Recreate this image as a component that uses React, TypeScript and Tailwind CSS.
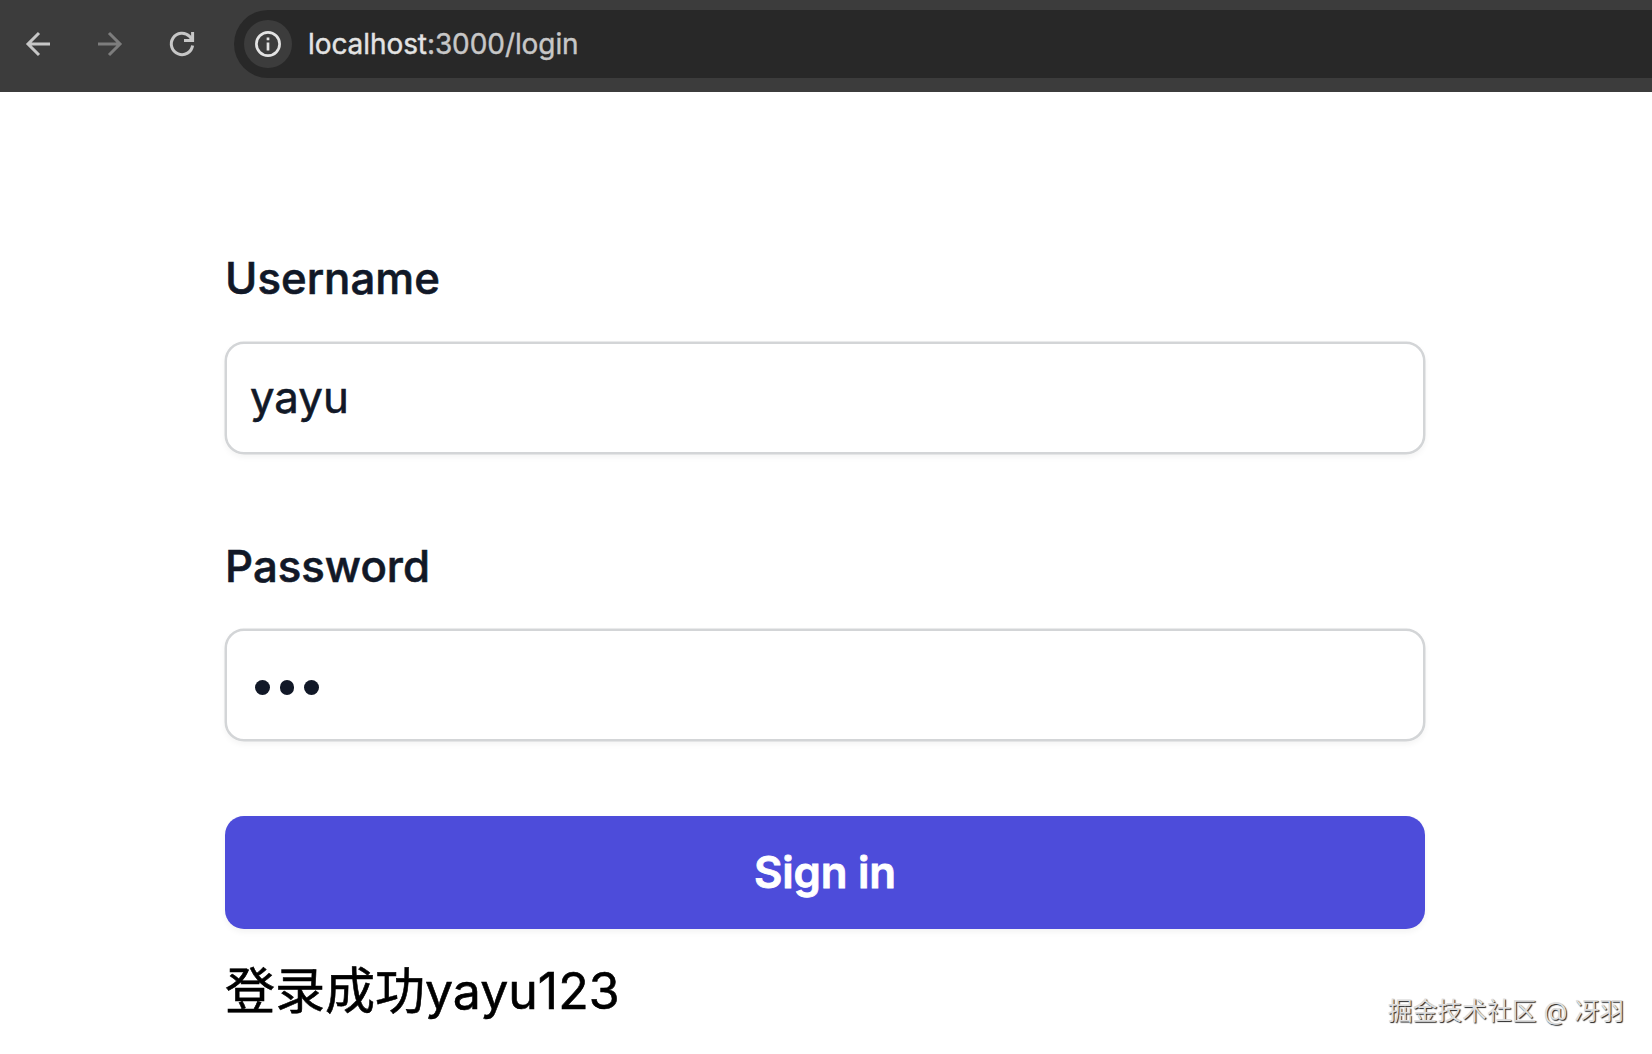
import { useState } from "react";

function BrowserBar() {
    return (
        <div className="flex h-[92px] items-start bg-[#3c3c3c] pt-[10px]">
            <div className="flex h-[68px] w-[234px] shrink-0 items-center gap-9 pl-5">
                <svg className="h-9 w-9" viewBox="0 0 36 36" fill="none" stroke="#c7c7c7" strokeWidth="3">
                    <path d="M30 18H8M19 7L8 18l11 11" />
                </svg>
                <svg className="h-9 w-9" viewBox="0 0 36 36" fill="none" stroke="#7d7d7d" strokeWidth="3">
                    <path d="M6 18h22M17 7l11 11-11 11" />
                </svg>
                <svg className="h-9 w-9" viewBox="0 0 36 36" fill="none" stroke="#c7c7c7" strokeWidth="3">
                    <path d="M28.6 19.5A10.7 10.7 0 1 1 25.6 10.4L28 13.6" />
                    <path d="M28.6 6v8.6H20" />
                </svg>
            </div>
            <div className="flex h-[68px] flex-1 items-center rounded-l-full bg-[#282828] pl-[10px]">
                <div className="flex h-12 w-12 items-center justify-center rounded-full bg-[#3c3c3c]">
                    <svg className="h-[26px] w-[26px]" viewBox="0 0 26 26" fill="none" stroke="#e3e3e3" strokeWidth="2.7">
                        <circle cx="13" cy="13" r="11.6" />
                        <path d="M13 11.4v8M13 6.6v2.6" />
                    </svg>
                </div>
                <span className="ml-4 whitespace-nowrap text-[28px] leading-none tracking-[-0.08px] text-[#e3e3e3] [-webkit-text-stroke:0.4px]">
                    localhost<span className="text-[#c7c7c7]">:3000/login</span>
                </span>
            </div>
        </div>
    );
}

const labelClass =
    "block h-[75px] text-[43.75px] leading-[75px] font-medium text-[#111827] [-webkit-text-stroke:0.6px]";

const inputClass =
    "block w-full rounded-[19px] border-2 border-[#d3d5d7] bg-white pl-[23px] text-[#111827] shadow-[0_0_0_0.5px_#d3d5d7,0_3px_6px_rgba(0,0,0,0.05)] outline-none";

export default function App() {
    const [username, setUsername] = useState("yayu");
    const [message] = useState("登录成功yayu123");

    return (
        <div className="h-[1054px] w-[1652px] overflow-hidden bg-white font-['Inter','Noto_Sans_CJK_SC',sans-serif]">
            <BrowserBar />

            <main className="flex h-[962px] flex-col justify-between">
                <form className="ml-[225px] w-[1200px] pt-[149px]" onSubmit={(e) => e.preventDefault()}>
                    <label htmlFor="username" className={labelClass}>
                        Username
                    </label>
                    <div className="mt-[26px]">
                        <input
                            id="username"
                            value={username}
                            onChange={(e) => setUsername(e.target.value)}
                            className={`${inputClass} h-[112px] pb-px text-[43.75px] [-webkit-text-stroke:0.6px]`}
                        />
                    </div>

                    <label className={`${labelClass} mt-[75px]`}>Password</label>
                    <div className={`${inputClass} mt-[25px] h-[112px]`}>
                        {/* masked value, one dot per character */}
                        <div className="flex h-full items-center gap-[10px] pt-[5px] pl-[5px]">
                            <span className="h-[14.5px] w-[14.5px] rounded-full bg-[#111827]" />
                            <span className="h-[14.5px] w-[14.5px] rounded-full bg-[#111827]" />
                            <span className="h-[14.5px] w-[14.5px] rounded-full bg-[#111827]" />
                        </div>
                    </div>

                    <button
                        type="submit"
                        className="mt-[75px] flex h-[113px] w-full items-center justify-center rounded-[19px] bg-[#4d4cda] text-[43.75px] font-semibold tracking-[-0.2px] text-white shadow-[0_3px_6px_rgba(0,0,0,0.05)] [-webkit-text-stroke:0.8px]"
                    >
                        Sign in
                    </button>
                    <p className="mt-[25px] h-[75px] text-[50px] leading-[75px] whitespace-nowrap text-black [-webkit-text-stroke:0.6px]">
                        {message}
                    </p>
                </form>

                <div className="-mt-[60px] mr-[28px] mb-[25px] self-end text-[24.8px] leading-9 whitespace-nowrap text-[#dedede] [text-shadow:1px_1px_1px_#222]">
                    掘金技术社区 @ 冴羽
                </div>
            </main>
        </div>
    );
}
